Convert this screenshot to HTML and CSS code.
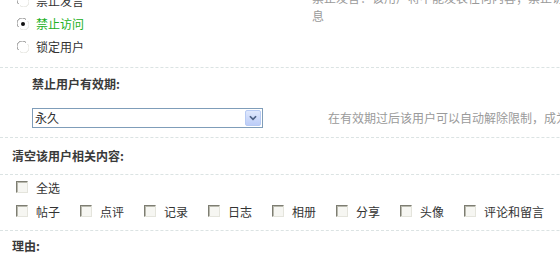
FILE: index.html
```html
<!DOCTYPE html>
<html lang="zh">
<head>
<meta charset="utf-8">
<link rel="stylesheet" href="styles.css">
</head>
<body>
<div class="wrap">
  <div class="sec sec-status">
    <div class="radios">
      <div class="radio-item"><span class="radio"><svg viewBox="0 0 12 12" width="12" height="12"><circle cx="6" cy="6" r="5.5" fill="#fff"/><path d="M1.5 9 A5 5 0 0 1 9 1.5" fill="none" stroke="#8a8a8a" stroke-width="1"/><path d="M10.5 3 A5 5 0 0 1 3 10.5" fill="none" stroke="#e2e2dc" stroke-width="1"/></svg></span><span>禁止发言</span></div>
      <div class="radio-item active"><span class="radio"><svg viewBox="0 0 12 12" width="12" height="12"><circle cx="6" cy="6" r="5.5" fill="#fff"/><path d="M1.5 9 A5 5 0 0 1 9 1.5" fill="none" stroke="#8a8a8a" stroke-width="1"/><path d="M10.5 3 A5 5 0 0 1 3 10.5" fill="none" stroke="#e2e2dc" stroke-width="1"/><circle cx="6" cy="6" r="2" fill="#111"/></svg></span><span>禁止访问</span></div>
      <div class="radio-item"><span class="radio"><svg viewBox="0 0 12 12" width="12" height="12"><circle cx="6" cy="6" r="5.5" fill="#fff"/><path d="M1.5 9 A5 5 0 0 1 9 1.5" fill="none" stroke="#8a8a8a" stroke-width="1"/><path d="M10.5 3 A5 5 0 0 1 3 10.5" fill="none" stroke="#e2e2dc" stroke-width="1"/></svg></span><span>锁定用户</span></div>
    </div>
    <div class="tip tip-top">禁止发言：该用户将不能发表任何内容；禁止访问：该用户将无法访问站点任何信<br>息</div>
  </div>

  <div class="sec sec-term">
    <div class="label">禁止用户有效期:</div>
    <div class="term-row">
      <div class="field">
        <div class="select">
          <span class="select-text">永久</span>
          <span class="select-btn"><svg viewBox="0 0 16 16" width="16" height="16"><path d="M4.5 6 L8 9.5 L11.5 6" fill="none" stroke="#4d6185" stroke-width="2"/></svg></span>
        </div>
      </div>
      <div class="tip">在有效期过后该用户可以自动解除限制，成为普通用户</div>
    </div>
  </div>

  <div class="sec sec-clear">
    <div class="label label-wide">清空该用户相关内容:</div>
  </div>

  <div class="sec sec-checks">
    <div class="check-row">
      <label class="check"><span class="box"></span><span>全选</span></label>
    </div>
    <div class="check-row">
      <label class="check"><span class="box"></span><span>帖子</span></label>
      <label class="check"><span class="box"></span><span>点评</span></label>
      <label class="check"><span class="box"></span><span>记录</span></label>
      <label class="check"><span class="box"></span><span>日志</span></label>
      <label class="check"><span class="box"></span><span>相册</span></label>
      <label class="check"><span class="box"></span><span>分享</span></label>
      <label class="check"><span class="box"></span><span>头像</span></label>
      <label class="check"><span class="box"></span><span>评论和留言</span></label>
    </div>
  </div>

  <div class="sec sec-reason">
    <div class="label label-wide">理由:</div>
  </div>
</div>
</body>
</html>
```

FILE: styles.css
```css
html, body {
  margin: 0;
  padding: 0;
  background: #fff;
  overflow: hidden;
}

body {
  font-family: "Noto Sans CJK SC", "Noto Sans", sans-serif;
  font-size: 12px;
  color: #333;
  width: 560px;
  height: 264px;
}

.wrap {
  width: 760px;
  margin-top: -11px;
}

.sec {
  border-bottom: 1px dashed #dbe3e3;
}

.sec-status {
  display: flex;
  height: 78px;
}

.radios {
  width: 312px;
  flex-shrink: 0;
  padding-left: 17px;
  box-sizing: border-box;
}

.radio-item {
  display: flex;
  align-items: center;
  height: 23px;
  gap: 7px;
  line-height: 23px;
}

.radio-item.active {
  color: #22b022;
}

.radio {
  display: flex;
  flex-shrink: 0;
  width: 12px;
  height: 12px;
}

.tip {
  color: #9a9a9a;
  line-height: 18px;
  white-space: nowrap;
}

.sec-term {
  padding: 6px 0 9px 32px;
}

.label {
  font-weight: bold;
  line-height: 20px;
  color: #3a3a3a;
}

.term-row {
  display: flex;
  align-items: center;
  margin-top: 14px;
}

.field {
  width: 296px;
  flex-shrink: 0;
}

.select {
  display: flex;
  align-items: center;
  width: 231px;
  height: 20px;
  box-sizing: border-box;
  border: 1px solid #7f9db9;
  background: #fff;
}

.select-text {
  flex: 1;
  padding-left: 2px;
  line-height: 18px;
}

.select-btn {
  display: flex;
  align-items: center;
  justify-content: center;
  width: 16px;
  height: 16px;
  margin-right: 1px;
  box-sizing: border-box;
  border: 1px solid #b8cbf4;
  border-radius: 2px;
  background: linear-gradient(#dfe8fd, #bccdf8);
}

.select-btn svg {
  width: 14px;
  height: 14px;
}

.sec-clear {
  padding: 8px 0 8px 12px;
}

.sec-checks {
  padding: 0 0 7px 16px;
}

.check-row {
  display: flex;
  height: 24px;
  align-items: center;
}

.check {
  display: flex;
  align-items: center;
  flex: 0 0 64px;
  gap: 8px;
  white-space: nowrap;
}

.box {
  flex: 0 0 12px;
  width: 12px;
  height: 12px;
  box-sizing: border-box;
  border-top: 1px solid #7d7d72;
  border-left: 1px solid #7d7d72;
  border-right: 1px solid #e4e4dc;
  border-bottom: 1px solid #e4e4dc;
  background: #f6f6f2;
  box-shadow: inset 1px 1px 0 #b9b9ae;
}

.sec-reason {
  border-bottom: none;
  padding: 5px 0 0 12px;
}
```
